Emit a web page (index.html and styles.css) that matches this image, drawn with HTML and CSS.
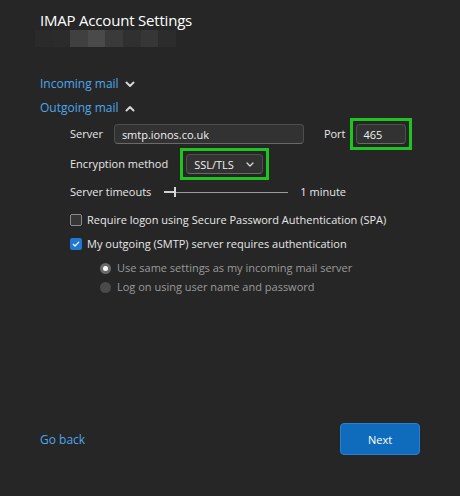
FILE: index.html
```html
<!DOCTYPE html>
<html>
<head>
<meta charset="utf-8">
<link rel="stylesheet" href="styles.css">
</head>
<body>
<div class="dialog">
  <header class="head">
    <h1 class="title">IMAP Account Settings</h1>
    <div class="blur">
      <span class="px" style="background:#2a2a2a"></span><span class="px" style="background:#2b2b2b"></span><span class="px" style="background:#404040"></span><span class="px" style="background:#4a4a4a"></span><span class="px" style="background:#3a3a3a"></span><span class="px" style="background:#303030"></span><span class="px" style="background:#363636"></span><span class="px" style="background:#2c2c2c"></span>
    </div>
  </header>

  <main class="content">
    <div class="section-link first">Incoming mail
      <svg class="chev" width="10" height="7" viewBox="0 0 10 7"><path d="M1.5 1.5 L5 5 L8.5 1.5" fill="none" stroke="#d4d4d4" stroke-width="2" stroke-linecap="round" stroke-linejoin="round"/></svg>
    </div>
    <div class="section-link second">Outgoing mail
      <svg class="chev" width="10" height="7" viewBox="0 0 10 7"><path d="M1.5 5.5 L5 2 L8.5 5.5" fill="none" stroke="#d4d4d4" stroke-width="2" stroke-linecap="round" stroke-linejoin="round"/></svg>
    </div>

    <div class="form">
      <div class="row server-row">
        <span class="label">Server</span>
        <div class="input server-input">smtp.ionos.co.uk</div>
        <span class="label port-label">Port</span>
        <div class="input port-input hl">465</div>
      </div>

      <div class="row enc-row">
        <span class="label">Encryption method</span>
        <div class="input select hl">SSL/TLS
          <svg class="sel-chev" width="8" height="5" viewBox="0 0 8 5"><path d="M1 1 L4 4 L7 1" fill="none" stroke="#d8d8d8" stroke-width="1.3" stroke-linecap="round" stroke-linejoin="round"/></svg>
        </div>
      </div>

      <div class="row time-row">
        <span class="label">Server timeouts</span>
        <div class="slider">
          <span class="track-fill"></span>
          <span class="thumb"></span>
          <span class="track"></span>
        </div>
        <span class="label">1 minute</span>
      </div>

      <div class="row check-row cb1">
        <span class="checkbox"></span>
        <span class="label">Require logon using Secure Password Authentication (SPA)</span>
      </div>

      <div class="row check-row cb2">
        <span class="checkbox checked">
          <svg width="10" height="10" viewBox="0 0 10 10"><path d="M2.2 5.3 L4 7 L7.8 3.2" fill="none" stroke="#fff" stroke-width="1.2" stroke-linecap="round" stroke-linejoin="round"/></svg>
        </span>
        <span class="label">My outgoing (SMTP) server requires authentication</span>
      </div>

      <div class="radios">
        <div class="row radio-row r1">
          <span class="radio checked"></span>
          <span class="label dim">Use same settings as my incoming mail server</span>
        </div>
        <div class="row radio-row r2">
          <span class="radio"></span>
          <span class="label dim">Log on using user name and password</span>
        </div>
      </div>
    </div>
  </main>

  <footer class="foot">
    <span class="link">Go back</span>
    <button class="next">Next</button>
  </footer>
</div>
</body>
</html>
```

FILE: styles.css
```css
html, body {
  margin: 0;
  padding: 0;
  background: #262626;
}
body {
  width: 460px;
  height: 496px;
  overflow: hidden;
  font-family: "Open Sans", "Noto Sans", sans-serif;
  color: #e6e6e6;
  font-size: 11px;
}
.dialog {
  height: 496px;
  display: flex;
  flex-direction: column;
  padding: 0 0 0 40px;
  box-sizing: border-box;
}
.head {
  padding-top: 10px;
}
.title {
  margin: 0;
  font-weight: 400;
  font-size: 15px;
  line-height: 21px;
  color: #ffffff;
  letter-spacing: -0.2px;
}
.blur {
  display: flex;
  margin-top: -1px;
  margin-left: -5px;
  height: 17px;
}
.px {
  width: 17.6px;
  height: 17px;
}
.content {
  flex: 1;
}
.section-link {
  color: #4ca6ec;
  font-size: 12px;
  line-height: 18px;
  display: flex;
  align-items: center;
  gap: 6px;
}
.section-link.first { margin-top: 28px; }
.section-link.second { margin-top: 6px; }
.chev { display: block; }

.form {
  padding-left: 30px;
  margin-top: 7px;
}
.row {
  display: flex;
  align-items: center;
}
.label {
  white-space: nowrap;
  line-height: 16px;
}
.input {
  box-sizing: border-box;
  height: 20px;
  background: #323232;
  border: 1px solid #4e4e4e;
  border-bottom-color: #6a6a6a;
  border-radius: 4px;
  color: #f0f0f0;
  padding: 0 7px;
  display: flex;
  align-items: center;
  font-size: 11px;
}
.hl {
  position: relative;
}
.hl::after {
  content: "";
  position: absolute;
  top: -7px;
  left: -7px;
  right: -7px;
  bottom: -7px;
  border: 3px solid #1fc41f;
}
.server-row { height: 20px; }
.server-input {
  width: 190px;
  margin-left: 11px;
}
.port-label { margin-left: 20px; }
.port-input {
  width: 50px;
  margin-left: 10px;
}
.enc-row {
  margin-top: 10px;
  height: 20px;
}
.select {
  width: 77px;
  margin-left: 18px;
  justify-content: space-between;
  padding-right: 8px;
}
.sel-chev { display: block; }

.time-row {
  margin-top: 8px;
  height: 20px;
}
.slider {
  width: 124px;
  margin-left: 13px;
  margin-right: 12px;
  height: 12px;
  display: flex;
  align-items: center;
}
.track-fill {
  width: 10px;
  height: 2px;
  background: #cfcfcf;
}
.thumb {
  width: 2px;
  height: 10px;
  background: #d8d8d8;
}
.track {
  flex: 1;
  height: 1px;
  background: #9a9a9a;
}

.check-row { height: 16px; }
.cb1 { margin-top: 10px; }
.cb2 { margin-top: 8px; }
.checkbox {
  box-sizing: border-box;
  width: 12px;
  height: 12px;
  border: 1px solid #8a8a8a;
  border-radius: 2px;
  background: #363636;
  margin-right: 5px;
  display: flex;
  align-items: center;
  justify-content: center;
}
.checkbox.checked {
  background: #1f78d1;
  border-color: #1f78d1;
}
.checkbox svg { display: block; }

.radios {
  padding-left: 30px;
  margin-top: 8px;
}
.radio-row { height: 16px; }
.r2 { margin-top: 3px; }
.radio {
  box-sizing: border-box;
  width: 11px;
  height: 11px;
  border-radius: 50%;
  background: #4a4a4a;
  margin-right: 6px;
}
.radio.checked {
  background: #ffffff;
  border: 3px solid #6a6a6a;
}
.dim { color: #9a9a9a; }

.foot {
  display: flex;
  align-items: center;
  justify-content: space-between;
  padding-right: 40px;
  margin-bottom: 41px;
}
.link {
  color: #4ca6ec;
  font-size: 12px;
}
.next {
  width: 80px;
  height: 32px;
  background: #0f6cbd;
  border: 1px solid #2b7fce;
  border-radius: 4px;
  color: #ffffff;
  font-family: "Open Sans", "Noto Sans", sans-serif;
  font-size: 11px;
  padding: 0;
}
```
